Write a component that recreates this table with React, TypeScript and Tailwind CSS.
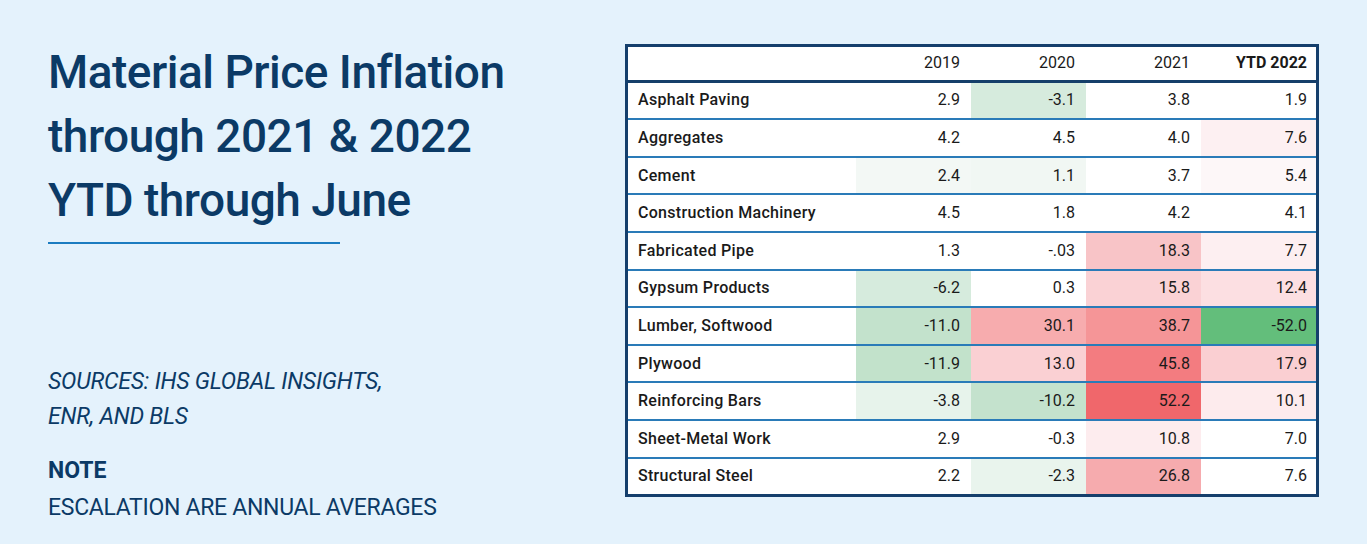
const years = ["2019", "2020", "2021"];

type Cell = { v: string; bg?: string };

const rows: { name: string; cells: Cell[] }[] = [
  { name: "Asphalt Paving", cells: [{ v: "2.9" }, { v: "-3.1", bg: "bg-[#d6ebdd]" }, { v: "3.8" }, { v: "1.9" }] },
  { name: "Aggregates", cells: [{ v: "4.2" }, { v: "4.5" }, { v: "4.0" }, { v: "7.6", bg: "bg-[#fdf0f2]" }] },
  { name: "Cement", cells: [{ v: "2.4", bg: "bg-[#f3f8f5]" }, { v: "1.1", bg: "bg-[#f1f7f3]" }, { v: "3.7" }, { v: "5.4", bg: "bg-[#fdf7f8]" }] },
  { name: "Construction Machinery", cells: [{ v: "4.5" }, { v: "1.8" }, { v: "4.2" }, { v: "4.1" }] },
  { name: "Fabricated Pipe", cells: [{ v: "1.3" }, { v: "-.03" }, { v: "18.3", bg: "bg-[#f8c4c7]" }, { v: "7.7", bg: "bg-[#fdeff1]" }] },
  { name: "Gypsum Products", cells: [{ v: "-6.2", bg: "bg-[#d6ebdd]" }, { v: "0.3" }, { v: "15.8", bg: "bg-[#fad2d5]" }, { v: "12.4", bg: "bg-[#fcdfe2]" }] },
  { name: "Lumber, Softwood", cells: [{ v: "-11.0", bg: "bg-[#c3e2cc]" }, { v: "30.1", bg: "bg-[#f7acae]" }, { v: "38.7", bg: "bg-[#f59597]" }, { v: "-52.0", bg: "bg-[#63be7b]" }] },
  { name: "Plywood", cells: [{ v: "-11.9", bg: "bg-[#c2e2cb]" }, { v: "13.0", bg: "bg-[#fad0d3]" }, { v: "45.8", bg: "bg-[#f37c80]" }, { v: "17.9", bg: "bg-[#facfd2]" }] },
  { name: "Reinforcing Bars", cells: [{ v: "-3.8", bg: "bg-[#e7f3eb]" }, { v: "-10.2", bg: "bg-[#c4e2cd]" }, { v: "52.2", bg: "bg-[#f0676b]" }, { v: "10.1", bg: "bg-[#fdebed]" }] },
  { name: "Sheet-Metal Work", cells: [{ v: "2.9" }, { v: "-0.3" }, { v: "10.8", bg: "bg-[#fdecee]" }, { v: "7.0" }] },
  { name: "Structural Steel", cells: [{ v: "2.2" }, { v: "-2.3", bg: "bg-[#e9f4ed]" }, { v: "26.8", bg: "bg-[#f6abae]" }, { v: "7.6" }] },
];

export default function App() {
  return (
    <div
      className="w-[1367px] h-[544px] bg-[#e4f2fc] flex text-[#0b3a66]"
      style={{ fontFamily: "Roboto, 'Noto Sans', sans-serif" }}
    >
      <div className="w-[625px] shrink-0 pl-[48px] pt-[40px] flex flex-col">
        <h1 className="text-[46px] leading-[64px] font-medium tracking-[-0.5px]">
          Material Price Inflation
          <br />
          through 2021 &amp; 2022
          <br />
          YTD through June
        </h1>
        <div className="mt-[10px] w-[292px] h-[2px] bg-[#1b7cc0]" />
        <p className="mt-[120px] text-[23px] leading-[35px] italic font-normal tracking-[-0.2px]">
          SOURCES: IHS GLOBAL INSIGHTS,
          <br />
          ENR, AND BLS
        </p>
        <p className="mt-[19px] text-[23px] leading-[36px] font-bold">NOTE</p>
        <p className="text-[23px] leading-[38px] font-normal tracking-[-0.3px]">ESCALATION ARE ANNUAL AVERAGES</p>
      </div>

      <div className="pt-[44px]">
        <div className="w-[694px] border-[3px] border-[#153f6c] bg-white text-[16px] text-[#1a1a1a]">
          <div className="grid grid-cols-[228px_115px_115px_115px_115px] h-[35.6px] border-b-[3px] border-[#163f6a]">
            <div />
            {years.map((y) => (
              <div key={y} className="flex items-center justify-end pr-[11px]">
                {y}
              </div>
            ))}
            <div className="flex items-center justify-end pr-[9px] font-bold">YTD 2022</div>
          </div>
          {rows.map((r, i) => (
            <div
              key={r.name}
              className={
                "grid grid-cols-[228px_115px_115px_115px_115px] " +
                (i < rows.length - 1 ? "h-[37.6px] border-b-2 border-[#2a7bb8]" : "h-[35.6px]")
              }
            >
              <div className="flex items-center pl-[10px] font-medium tracking-[0.3px]">{r.name}</div>
              {r.cells.map((c, j) => (
                <div
                  key={j}
                  className={"flex items-center justify-end " + (j === 3 ? "pr-[9px] " : "pr-[11px] ") + (c.bg ?? "")}
                >
                  {c.v}
                </div>
              ))}
            </div>
          ))}
        </div>
      </div>
    </div>
  );
}
